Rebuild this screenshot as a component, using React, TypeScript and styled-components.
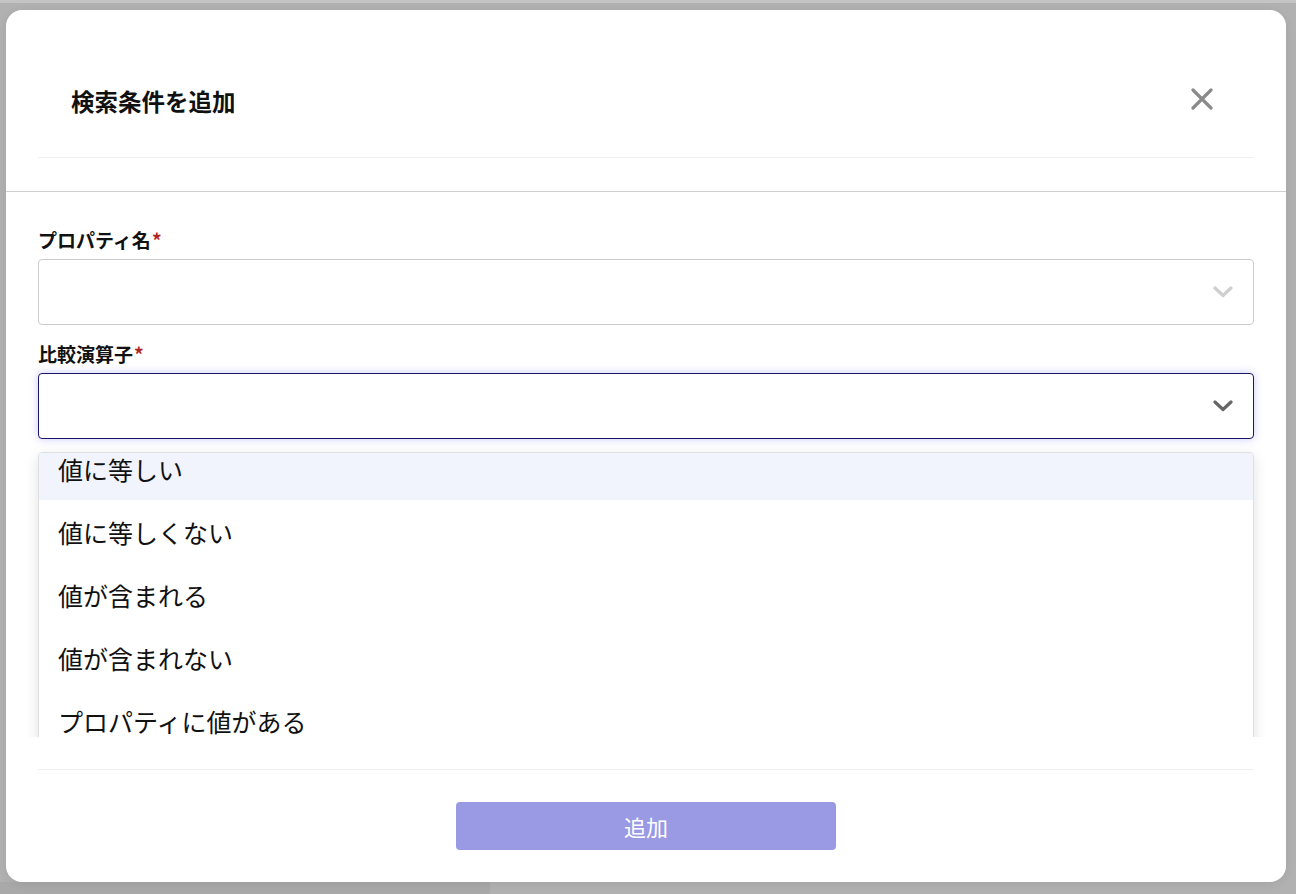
import React from "react";
import styled, { createGlobalStyle } from "styled-components";

const GlobalStyle = createGlobalStyle`
  html, body {
    margin: 0;
    padding: 0;
  }
  body {
    font-family: "Noto Sans CJK JP", "Noto Sans", sans-serif;
    color: #111;
  }
  * {
    box-sizing: border-box;
  }
`;

const Backdrop = styled.div`
  width: 1296px;
  height: 894px;
  padding: 10px 10px 12px 6px;
  background:
    linear-gradient(to bottom, #c4c4c4 0, #c4c4c4 3px, transparent 3px),
    linear-gradient(to right, #a9a9a9 0, #a9a9a9 490px, transparent 490px) bottom / 100% 12px no-repeat,
    #b1b1b1;
  overflow: hidden;
`;

const Modal = styled.div`
  width: 1280px;
  height: 872px;
  background: #fff;
  border-radius: 16px;
  display: flex;
  flex-direction: column;
  box-shadow: 0 2px 10px rgba(0, 0, 0, 0.08);
`;

const HeaderWrap = styled.div`
  padding: 0 32px 33px;
  border-bottom: 1px solid #cfcfcf;
`;

const Header = styled.div`
  height: 148px;
  display: flex;
  align-items: center;
  justify-content: space-between;
  padding: 34px 41px 0 33px;
  border-bottom: 1px solid #f1f1f1;
`;

const Title = styled.h2`
  margin: 0;
  font-size: 23.5px;
  line-height: 30px;
  font-weight: 700;
  color: #111;
`;

const CloseButton = styled.button`
  border: none;
  background: none;
  padding: 0;
  width: 22px;
  height: 22px;
  display: flex;
  margin-top: -4px;
  cursor: pointer;
`;

const Body = styled.div`
  position: relative;
  height: 545px;
  overflow: hidden;
  padding: 37px 32px 0;
`;

const Field = styled.div`
  display: flex;
  flex-direction: column;
  gap: 8px;
  & + & {
    margin-top: 18px;
  }
`;

const Label = styled.label`
  font-size: 19px;
  line-height: 22px;
  font-weight: 700;
  color: #111;
`;

const Required = styled.span`
  color: #b3261e;
  margin-left: 1px;
`;

const SelectBox = styled.div<{ $focused?: boolean }>`
  height: 66px;
  border: 1px solid ${(p) => (p.$focused ? "#1c1669" : "#cccccc")};
  border-radius: 4px;
  background: #fff;
  display: flex;
  align-items: center;
  justify-content: flex-end;
  padding-right: 20px;
  box-shadow: ${(p) => (p.$focused ? "0 0 8px rgba(110, 100, 240, 0.35)" : "none")};
`;

const Menu = styled.div`
  position: absolute;
  left: 32px;
  right: 32px;
  top: 260px;
  height: 320px;
  overflow: hidden;
  background: #fff;
  border: 1px solid #e0e0e0;
  border-radius: 4px;
  box-shadow: 0 4px 14px rgba(0, 0, 0, 0.12);
`;

const OptionList = styled.ul`
  list-style: none;
  margin: -16px 0 0;
  padding: 0;
`;

const Option = styled.li<{ $active?: boolean }>`
  height: 63px;
  display: flex;
  align-items: center;
  padding-left: 19px;
  font-size: 25px;
  color: #111;
  background: ${(p) => (p.$active ? "#f1f4fd" : "#fff")};
`;

const Footer = styled.div`
  padding: 32px 32px 0;
`;

const FooterInner = styled.div`
  border-top: 1px solid #f1f1f1;
  padding-top: 32px;
  display: flex;
  justify-content: center;
`;

const SubmitButton = styled.button`
  width: 380px;
  height: 48px;
  border: none;
  border-radius: 4px;
  background: #9999e4;
  color: #fff;
  font-family: "Noto Sans CJK JP", sans-serif;
  font-size: 22px;
  cursor: not-allowed;
`;

const Chevron = ({ color }: { color: string }) => (
  <svg width="20" height="12" viewBox="0 0 20 12">
    <polyline
      points="2,2 10,9.5 18,2"
      fill="none"
      stroke={color}
      strokeWidth="3.2"
      strokeLinecap="round"
      strokeLinejoin="round"
    />
  </svg>
);

const options = [
  "値に等しい",
  "値に等しくない",
  "値が含まれる",
  "値が含まれない",
  "プロパティに値がある",
  "プロパティに値がない",
];

export default function App() {
  return (
    <>
      <GlobalStyle />
      <Backdrop>
        <Modal>
          <HeaderWrap>
            <Header>
              <Title>検索条件を追加</Title>
              <CloseButton aria-label="閉じる">
                <svg width="22" height="22" viewBox="0 0 22 22">
                  <path
                    d="M2 2 L20 20 M20 2 L2 20"
                    stroke="#8a8a8a"
                    strokeWidth="3.2"
                    strokeLinecap="round"
                  />
                </svg>
              </CloseButton>
            </Header>
          </HeaderWrap>
          <Body>
            <Field>
              <Label>
                プロパティ名<Required>*</Required>
              </Label>
              <SelectBox>
                <Chevron color="#cfcfcf" />
              </SelectBox>
            </Field>
            <Field>
              <Label>
                比較演算子<Required>*</Required>
              </Label>
              <SelectBox $focused>
                <Chevron color="#666666" />
              </SelectBox>
            </Field>
            <Menu>
              <OptionList>
                {options.map((o, i) => (
                  <Option key={o} $active={i === 0}>
                    {o}
                  </Option>
                ))}
              </OptionList>
            </Menu>
          </Body>
          <Footer>
            <FooterInner>
              <SubmitButton disabled>追加</SubmitButton>
            </FooterInner>
          </Footer>
        </Modal>
      </Backdrop>
    </>
  );
}
